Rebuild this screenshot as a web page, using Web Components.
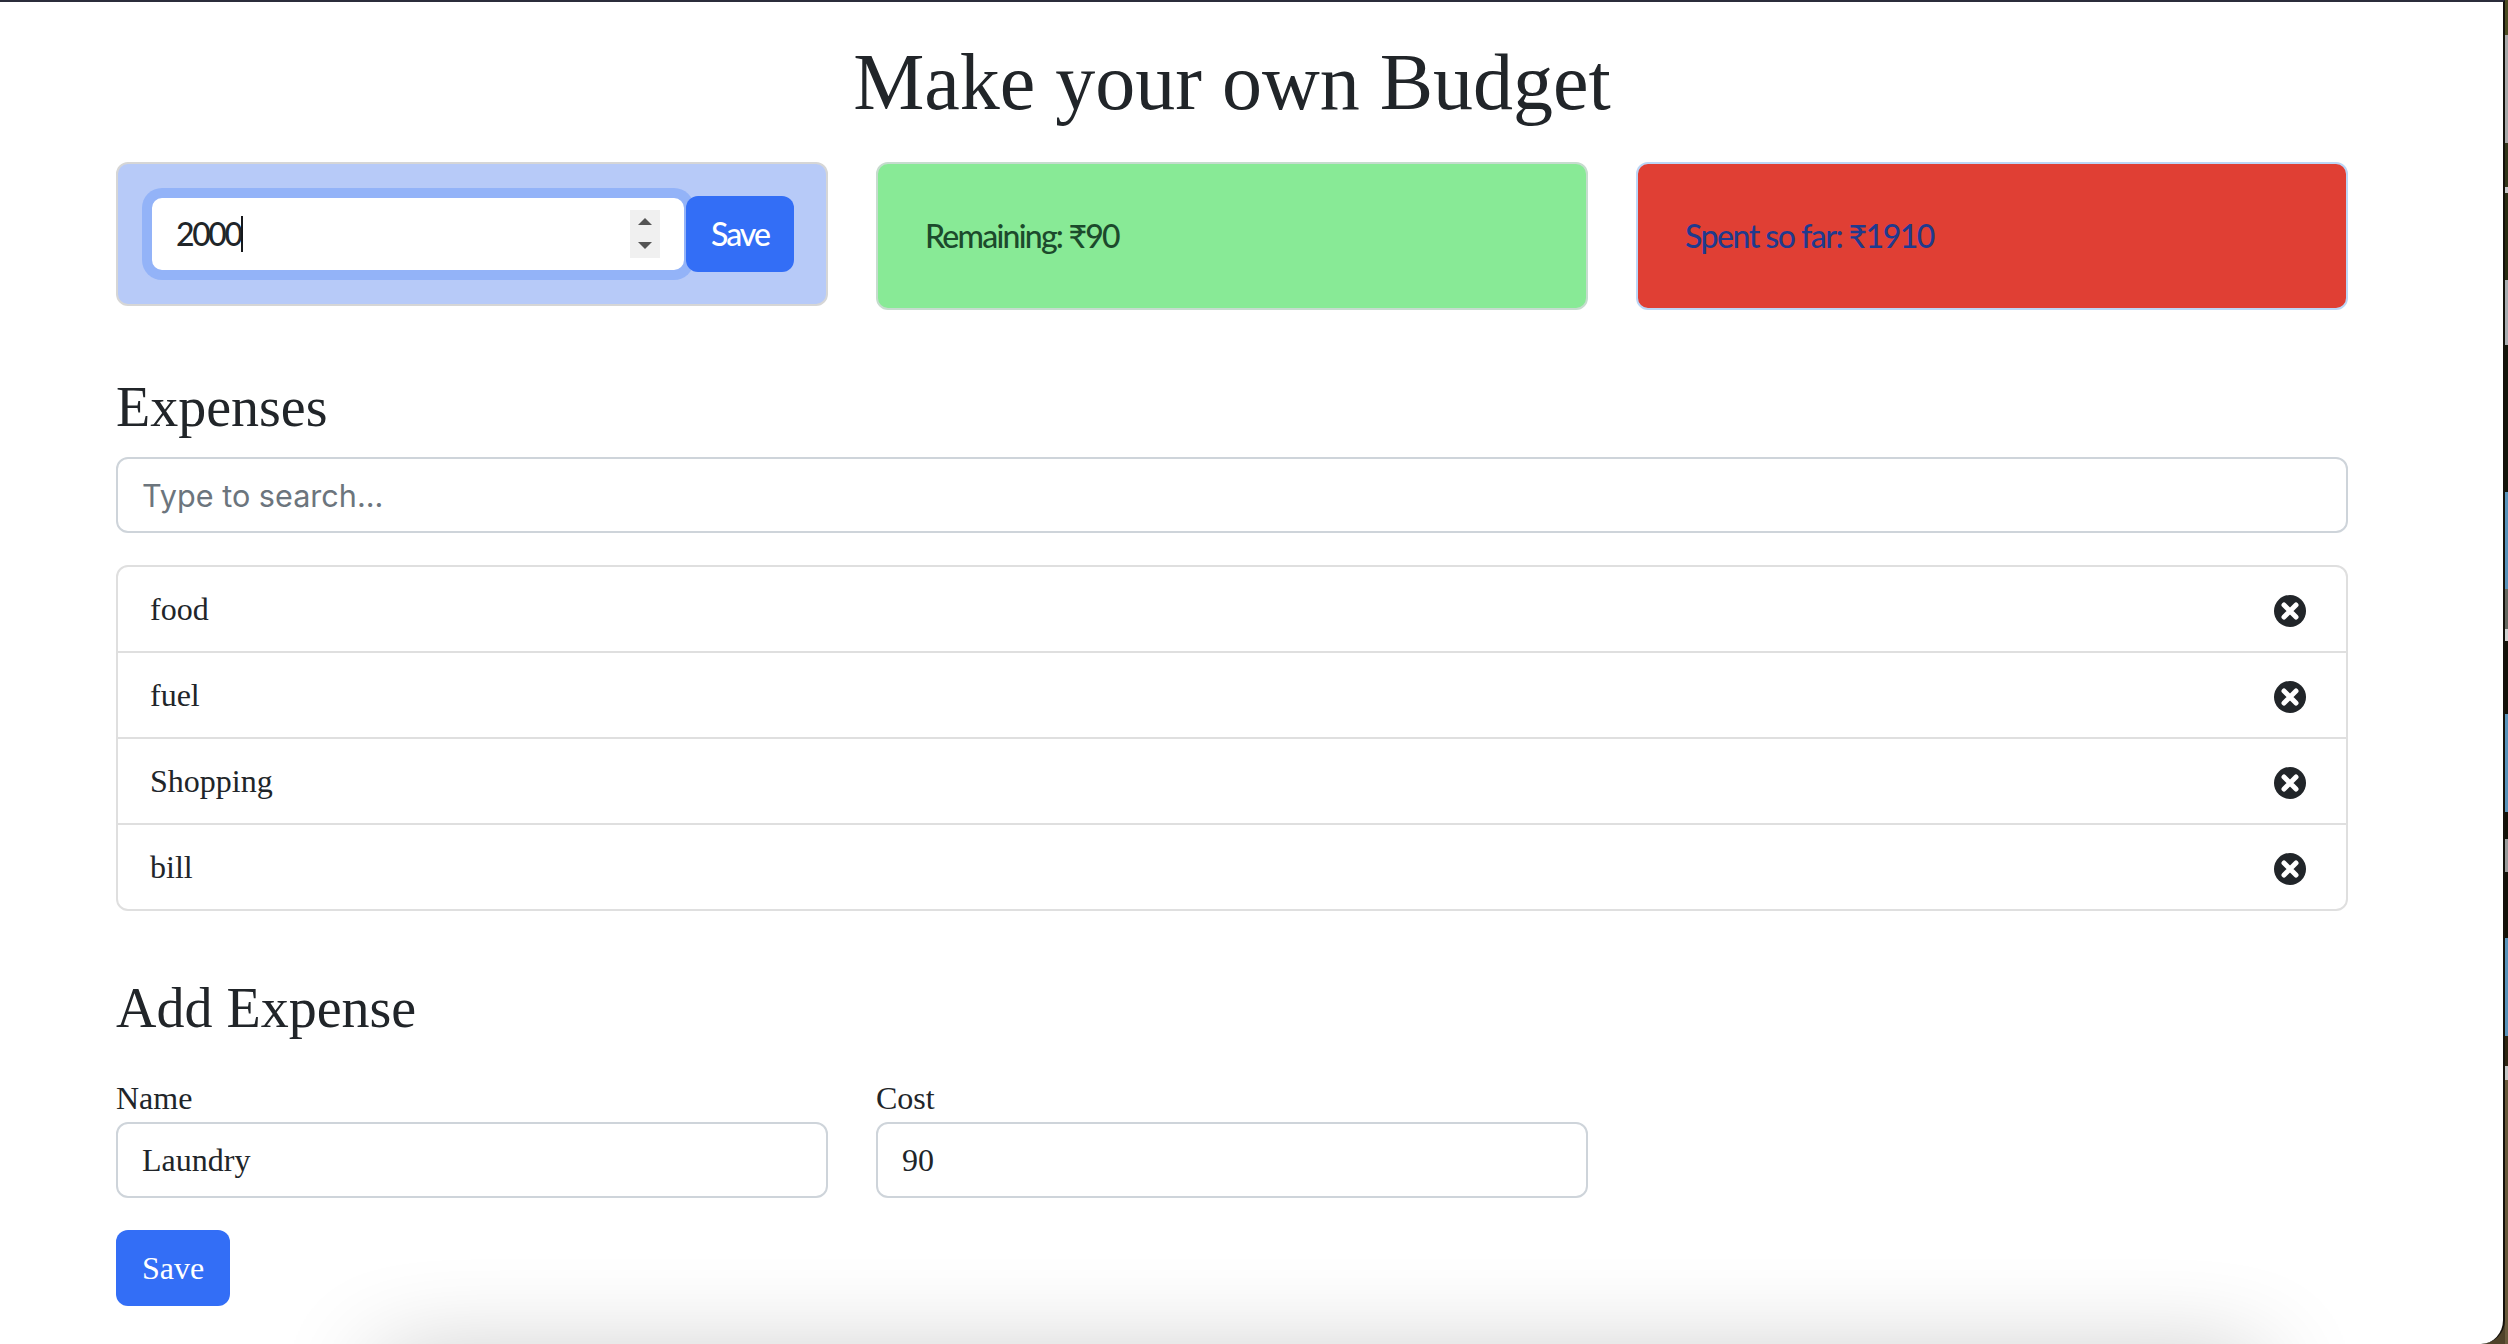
<!DOCTYPE html>
<html lang="en">
<head>
<meta charset="utf-8">
<title>Make your own Budget</title>
<style>
  html, body { margin: 0; height: 100%; overflow: hidden; }
  body {
    display: flex;
    background: #4f4229;
    color: #212529;
    font: 32px/48px "Liberation Serif", "Times New Roman", serif;
  }
</style>
</head>
<body>
<budget-window>
  <budget-title>Make your own Budget</budget-title>
  <budget-row>
    <budget-card kind="primary">
      <num-field value="2000"></num-field>
      <blue-button gill>Save</blue-button>
    </budget-card>
    <budget-card kind="success">Remaining: ₹90</budget-card>
    <budget-card kind="danger">Spent so far: ₹1910</budget-card>
  </budget-row>

  <section-title style="margin-top:64px">Expenses</section-title>
  <text-field placeholder="Type to search..."></text-field>

  <expense-list style="margin-top:32px">
    <expense-item>food</expense-item>
    <expense-item>fuel</expense-item>
    <expense-item>Shopping</expense-item>
    <expense-item>bill</expense-item>
  </expense-list>

  <section-title style="margin-top:64px">Add Expense</section-title>
  <budget-row style="margin-top:32px">
    <div>
      <field-label>Name</field-label>
      <text-field value="Laundry"></text-field>
    </div>
    <div>
      <field-label>Cost</field-label>
      <text-field value="90"></text-field>
    </div>
  </budget-row>
  <blue-button style="margin-top:32px">Save</blue-button>
</budget-window>
<desktop-strip></desktop-strip>

<script>
// small helper, every element here is just a template + open shadow root
function define(name, css, html, setup) {
  const template = document.createElement("template");
  template.innerHTML = `<style>${css}</style>${html}`;
  customElements.define(name, class extends HTMLElement {
    constructor() {
      super();
      this.attachShadow({mode: "open"}).appendChild(template.content.cloneNode(true));
    }
    connectedCallback() {
      if (setup) setup(this, this.shadowRoot);
    }
  });
}

define("budget-window", `
  :host {
    display: block;
    position: relative;
    flex: 1;
    box-sizing: border-box;
    height: 1344px;
    overflow: hidden;
    background: #fff;
    border-top: 2px solid #2b2d3b;
    border-right: 2px solid #14110b;
    border-bottom-right-radius: 24px;
    padding-left: 116px;
  }
  /* shadow of whatever sits below the window */
  #shade {
    position: absolute;
    left: 380px;
    right: 244px;
    top: 1362px;
    height: 60px;
    box-shadow: 0 0 100px 0 rgba(0, 0, 0, .3);
  }
  #page { width: 2232px; }
`, `<div id="page"><slot></slot></div><div id="shade"></div>`);

define("budget-title", `
  :host {
    display: block;
    margin-top: 32px;
    margin-bottom: 32px;
    text-align: center;
    font-size: 80px;
    line-height: 96px;
  }
`, `<slot></slot>`);

define("section-title", `
  :host {
    display: block;
    margin-bottom: 16px;
    font-size: 56px;
    line-height: 67px;
  }
`, `<slot></slot>`);

define("field-label", `
  :host { display: block; }
`, `<slot></slot>`);

define("budget-row", `
  :host {
    display: grid;
    grid-template-columns: repeat(3, 712px);
    column-gap: 48px;
    align-items: start;
  }
`, `<slot></slot>`);

define("budget-card", `
  :host {
    display: block;
    box-sizing: border-box;
    border: 2px solid;
    border-radius: 12px;
    padding: 48px 47px;
    font-family: Lato, "Noto Sans", sans-serif;
    font-weight: 500;
    letter-spacing: -1.5px;
  }
  :host([kind="primary"]) {
    display: flex;
    padding: 32px;
    background: #b7caf8;
    border-color: #d6d6d6;
  }
  :host([kind="success"]) {
    background: #88ea96;
    border-color: #c6dcce;
    color: #1c4a2c;
    letter-spacing: -1.75px;
  }
  :host([kind="danger"]) {
    background: #e03f34;
    border-color: #bcd6f6;
    color: #1f3a8e;
  }
`, `<slot></slot>`);

define("num-field", `
  :host {
    flex: 1;
    display: flex;
    align-items: center;
    box-sizing: border-box;
    height: 76px;
    padding: 0 24px;
    background: #fff;
    border: 2px solid #93b3f8;
    border-radius: 12px;
    box-shadow: 0 0 0 8px #93b3f8;
  }
  #val { color: #212529; letter-spacing: -2.4px; }
  #caret { width: 2px; height: 36px; background: #16181b; }
  #spin {
    margin-left: auto;
    width: 30px;
    height: 48px;
    background: #f0f0f0;
    display: flex;
    flex-direction: column;
    align-items: center;
    justify-content: space-between;
    padding: 8px 0 9px;
    box-sizing: border-box;
  }
  #spin i { width: 0; height: 0; border: 7px solid transparent; border-top: 0; border-bottom: 7px solid #555; }
  #spin i + i { border-bottom: 0; border-top: 7px solid #555; }
`, `<span id="val"></span><span id="caret"></span><div id="spin"><i></i><i></i></div>`,
(el, root) => {
  root.getElementById("val").textContent = el.getAttribute("value");
});

define("text-field", `
  :host {
    display: flex;
    align-items: center;
    box-sizing: border-box;
    height: 76px;
    padding: 0 24px;
    background: #fff;
    border: 2px solid #ced4da;
    border-radius: 12px;
  }
  .ph {
    color: #6c757d;
    font-family: Inter, "Liberation Sans", sans-serif;
    font-size: 30.6px;
    margin-top: 2px;
  }
`, `<span id="val"></span>`,
(el, root) => {
  const val = root.getElementById("val");
  if (el.hasAttribute("placeholder")) {
    val.className = "ph";
    val.textContent = el.getAttribute("placeholder");
  } else {
    val.textContent = el.getAttribute("value");
  }
});

define("blue-button", `
  :host {
    display: inline-flex;
    flex: none;
    align-items: center;
    box-sizing: border-box;
    height: 76px;
    padding: 0 26px;
    background: #336ef6;
    color: #fff;
    border-radius: 12px;
    vertical-align: top;
  }
  :host([gill]) {
    width: 108px;
    padding: 0;
    justify-content: center;
    letter-spacing: -2px;
  }
`, `<slot></slot>`);

define("expense-list", `
  :host {
    display: block;
    border: 2px solid #dfdfdf;
    border-radius: 12px;
  }
  ::slotted(expense-item:not(:first-child)) { border-top: 2px solid #dfdfdf; }
`, `<slot></slot>`);

define("expense-item", `
  :host {
    display: flex;
    align-items: center;
    justify-content: space-between;
    height: 84px;
    padding: 0 40px 0 32px;
  }
  :host(:not(:first-child)) { height: 86px; box-sizing: border-box; }
  svg { display: block; margin-top: 4px; }
`, `<span><slot></slot></span>
  <svg width="32" height="32" viewBox="0 0 32 32" aria-hidden="true">
    <circle cx="16" cy="16" r="16" fill="#212529"/>
    <path d="M10 10 22 22M22 10 10 22" stroke="#fff" stroke-width="5" stroke-linecap="round"/>
  </svg>`);

// sliver of desktop wallpaper visible right of the window: [height, colour]
const stripBands = [
  [35, "#4c4c22"], [108, "#a8a8a8"], [44, "#33361a"], [6, "#c8c8c8"], [87, "#2a2c12"],
  [65, "#a9acb0"], [147, "#14150a"],
  [97, "#5a93ba"], [40, "#666860"], [12, "#cfcfcf"], [73, "#141208"],
  [98, "#5a93ba"], [27, "#141208"], [33, "#9a9a9a"], [66, "#141208"],
  [98, "#5a93ba"], [30, "#2f2512"], [14, "#c4c4c4"], [263, "#6a5a3c"],
];

define("desktop-strip", `
  :host {
    display: flex;
    flex-direction: column;
    flex: none;
    width: 3px;
    height: 1344px;
    background: #6a5a3c;
  }
  div { flex: none; }
`, ``, (el, root) => {
  for (const [h, color] of stripBands) {
    const band = document.createElement("div");
    band.style.height = `${h}px`;
    band.style.background = color;
    root.appendChild(band);
  }
});
</script>
</body>
</html>
